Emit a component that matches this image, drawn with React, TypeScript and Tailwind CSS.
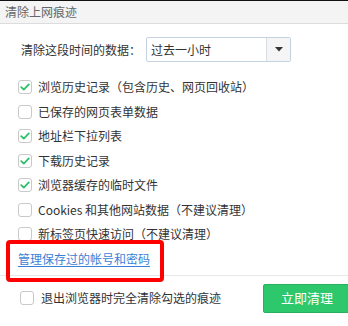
import React, { useState } from "react";

type Item = { label: string; checked: boolean };

const initialItems: Item[] = [
  { label: "浏览历史记录（包含历史、网页回收站）", checked: true },
  { label: "已保存的网页表单数据", checked: false },
  { label: "地址栏下拉列表", checked: true },
  { label: "下载历史记录", checked: true },
  { label: "浏览器缓存的临时文件", checked: true },
  { label: "Cookies 和其他网站数据（不建议清理）", checked: false },
  { label: "新标签页快速访问（不建议清理）", checked: false },
];

const CheckBox: React.FC<{ checked: boolean; onClick: () => void }> = ({ checked, onClick }) => (
  <span
    onClick={onClick}
    className="flex h-[14px] w-[14px] shrink-0 items-center justify-center rounded-[3px] border border-[#c9c9c9] bg-white"
  >
    {checked && (
      <svg width="10" height="8" viewBox="0 0 10 8" fill="none">
        <path d="M1.2 4.2 L3.8 6.6 L8.8 1.4" stroke="#2ec26a" strokeWidth="1.8" strokeLinecap="round" strokeLinejoin="round" />
      </svg>
    )}
  </span>
);

const App: React.FC = () => {
  const [items, setItems] = useState<Item[]>(initialItems);
  const [clearOnExit, setClearOnExit] = useState(false);

  const toggle = (idx: number) =>
    setItems((prev) => prev.map((it, i) => (i === idx ? { ...it, checked: !it.checked } : it)));

  return (
    <div
      className="relative h-[326px] w-[348px] overflow-hidden bg-white text-[12px] text-[#333]"
      style={{ fontFamily: '"Noto Sans CJK SC", "Noto Sans", sans-serif' }}
    >
      {/* title bar */}
      <div className="flex h-[24px] items-center border-t border-b border-t-[#111] border-b-[#dcdcdc] bg-[#f4f4f4] pl-[5px] text-[12px] text-[#666]">
        清除上网痕迹
      </div>

      {/* time range */}
      <div className="mt-[13px] flex items-center pl-[21px]">
        <span className="w-[125px]">清除这段时间的数据：</span>
        <div className="flex h-[25px] w-[145px] items-stretch rounded-[2px] border border-[#c4d2e0] bg-white">
          <span className="flex flex-1 items-center pl-[4px]">过去一小时</span>
          <span className="flex w-[24px] items-center justify-center border-l border-[#d8dde3] bg-[#f5f5f5]">
            <svg width="8" height="5" viewBox="0 0 8 5">
              <path d="M0 0 H8 L4 4.5 Z" fill="#333" />
            </svg>
          </span>
        </div>
      </div>

      {/* options */}
      <div className="mt-[13px] flex flex-col pl-[18px]">
        {items.map((it, idx) => (
          <div key={idx} className="flex h-[24.5px] items-center gap-[6px]">
            <CheckBox checked={it.checked} onClick={() => toggle(idx)} />
            <span>{it.label}</span>
          </div>
        ))}
        <div className="flex h-[24px] items-center">
          <a href="#" className="text-[#3b7fd6] underline underline-offset-2">
            管理保存过的帐号和密码
          </a>
        </div>
      </div>

      {/* footer */}
      <div className="mt-[4px] flex items-center border-t border-[#e8e8e8] pt-[8px] pl-[20px]">
        <CheckBox checked={clearOnExit} onClick={() => setClearOnExit(!clearOnExit)} />
        <span className="ml-[7px]">退出浏览器时完全清除勾选的痕迹</span>
        <button className="-mr-[3px] ml-auto h-[29px] w-[88px] shrink-0 rounded-[2px] border border-[#27b05f] bg-[#2ec86c] text-[13px] text-white">
          立即清理
        </button>
      </div>

      {/* annotation */}
      <div className="pointer-events-none absolute left-[6px] top-[240px] h-[42px] w-[158px] rounded-[4px] border-4 border-[#ff0000]" />
    </div>
  );
};

export default App;
